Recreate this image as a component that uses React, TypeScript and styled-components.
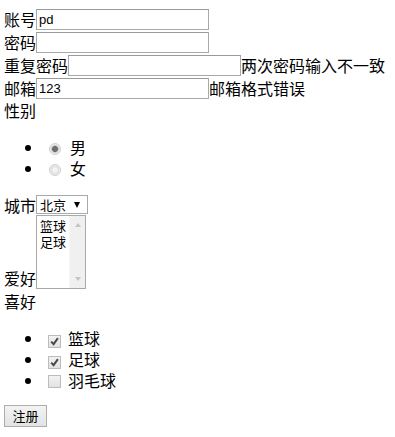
import styled, { createGlobalStyle } from "styled-components";

const GlobalStyle = createGlobalStyle`
  body {
    margin: 8px 4px;
    font-family: "Noto Sans CJK SC", "Microsoft YaHei", sans-serif;
    font-size: 16px;
    color: #000;
    background: #fff;
  }
`;

const CheckMark = () => (
  <svg width="9" height="9" viewBox="0 0 9 9">
    <path d="M1.2 4.6 L3.6 7.2 L7.9 1.2" fill="none" stroke="#4a4a4a" strokeWidth="2" />
  </svg>
);

export default function App() {
  return (
    <S.Form>
      <GlobalStyle />
      <S.Row>
        <S.Label>账号</S.Label>
        <S.TextInput defaultValue="pd" />
      </S.Row>
      <S.Row>
        <S.Label>密码</S.Label>
        <S.TextInput type="password" />
      </S.Row>
      <S.Row>
        <S.Label>重复密码</S.Label>
        <S.TextInput type="password" />
        <S.Label>两次密码输入不一致</S.Label>
      </S.Row>
      <S.Row>
        <S.Label>邮箱</S.Label>
        <S.TextInput defaultValue="123" />
        <S.Label>邮箱格式错误</S.Label>
      </S.Row>
      <S.Line>性别</S.Line>
      <S.List>
        <S.Item>
          <S.Radio $checked />
          男
        </S.Item>
        <S.Item>
          <S.Radio />
          女
        </S.Item>
      </S.List>
      <S.CityRow>
        <S.Label>城市</S.Label>
        <S.Select>北京</S.Select>
      </S.CityRow>
      <S.HobbyRow>
        <S.Label>爱好</S.Label>
        <S.ListBox>
          <S.Options>
            <S.Option>篮球</S.Option>
            <S.Option>足球</S.Option>
          </S.Options>
          <S.ScrollTrack>
            <S.ArrowUp />
            <S.ArrowDown />
          </S.ScrollTrack>
        </S.ListBox>
      </S.HobbyRow>
      <S.Line>喜好</S.Line>
      <S.List $bottom={14}>
        <S.Item>
          <S.Check>
            <CheckMark />
          </S.Check>
          篮球
        </S.Item>
        <S.Item>
          <S.Check>
            <CheckMark />
          </S.Check>
          足球
        </S.Item>
        <S.Item>
          <S.Check />
          羽毛球
        </S.Item>
      </S.List>
      <S.Button type="button">注册</S.Button>
    </S.Form>
  );
}

const S = {
  Form: styled.form`
    display: flex;
    flex-direction: column;
    align-items: flex-start;
  `,
  Row: styled.div`
    display: flex;
    align-items: center;
    height: 23px;
    white-space: nowrap;
  `,
  Label: styled.span`
    line-height: 21px;
  `,
  TextInput: styled.input`
    box-sizing: border-box;
    width: 173px;
    height: 21px;
    margin: 0;
    padding: 0 2px;
    border: 1px solid #a9a9a9;
    border-top-color: #9a9a9a;
    font-family: "Liberation Sans", Arial, sans-serif;
    font-size: 13px;
    color: #000;
    outline: none;
  `,
  Line: styled.div`
    line-height: 21px;
    height: 21px;
  `,
  List: styled.ul<{ $bottom?: number }>`
    margin: 16px 0 ${(p) => p.$bottom ?? 16}px;
    padding-left: 40px;
    list-style: disc;
  `,
  Item: styled.li`
    height: 21px;
    line-height: 21px;
  `,
  Radio: styled.span<{ $checked?: boolean }>`
    display: inline-block;
    box-sizing: border-box;
    width: 12px;
    height: 12px;
    margin: 0 9px 0 5px;
    vertical-align: -1px;
    border-radius: 50%;
    border: 1px solid #cfcfcf;
    background: ${(p) =>
      p.$checked
        ? "radial-gradient(circle, #6f6f6f 0 2.6px, #bdbdbd 3.2px, #e9e9e9 4.2px)"
        : "radial-gradient(circle, #f4f4f4 0 2.4px, #d8d8d8 3.2px, #ececec 4.2px)"};
  `,
  Check: styled.span`
    display: inline-flex;
    align-items: center;
    justify-content: center;
    box-sizing: border-box;
    width: 13px;
    height: 13px;
    margin: 0 7px 0 4px;
    vertical-align: -1px;
    border: 1px solid #bcbcbc;
    background: linear-gradient(#f2f2f2, #e2e2e2);
  `,
  CityRow: styled.div`
    display: flex;
    align-items: flex-start;
    height: 20px;
    white-space: nowrap;
  `,
  Select: styled.span`
    position: relative;
    box-sizing: border-box;
    width: 52px;
    height: 19px;
    padding-left: 3px;
    border: 1px solid #a9a9a9;
    font-size: 13px;
    line-height: 17px;
    background: #fff;
    &::after {
      content: "";
      position: absolute;
      right: 7px;
      top: 6px;
      border-left: 3.5px solid transparent;
      border-right: 3.5px solid transparent;
      border-top: 6px solid #000;
    }
  `,
  HobbyRow: styled.div`
    display: flex;
    align-items: flex-end;
    height: 76px;
    padding-bottom: 2px;
    box-sizing: border-box;
  `,
  ListBox: styled.div`
    display: flex;
    box-sizing: border-box;
    width: 50px;
    height: 74px;
    border: 1px solid #a9a9a9;
    background: #fff;
  `,
  Options: styled.div`
    flex: 1;
    padding: 2px 0 0 3px;
  `,
  Option: styled.div`
    font-size: 13px;
    line-height: 16px;
  `,
  ScrollTrack: styled.div`
    display: flex;
    flex-direction: column;
    justify-content: space-between;
    align-items: center;
    width: 15px;
    padding: 7px 0;
    background: #f0f0f0;
    border-left: 1px solid #f6f6f6;
  `,
  ArrowUp: styled.span`
    border-left: 3.5px solid transparent;
    border-right: 3.5px solid transparent;
    border-bottom: 4px solid #c4c4c4;
  `,
  ArrowDown: styled.span`
    border-left: 3.5px solid transparent;
    border-right: 3.5px solid transparent;
    border-top: 4px solid #c4c4c4;
  `,
  Button: styled.button`
    box-sizing: border-box;
    width: 43px;
    height: 22px;
    margin: 0;
    padding: 0;
    border: 1px solid #adadad;
    border-radius: 0;
    background: linear-gradient(#f3f3f3, #e3e3e3);
    font-family: "Noto Sans CJK SC", sans-serif;
    font-size: 13px;
    line-height: 20px;
    color: #000;
  `,
};
